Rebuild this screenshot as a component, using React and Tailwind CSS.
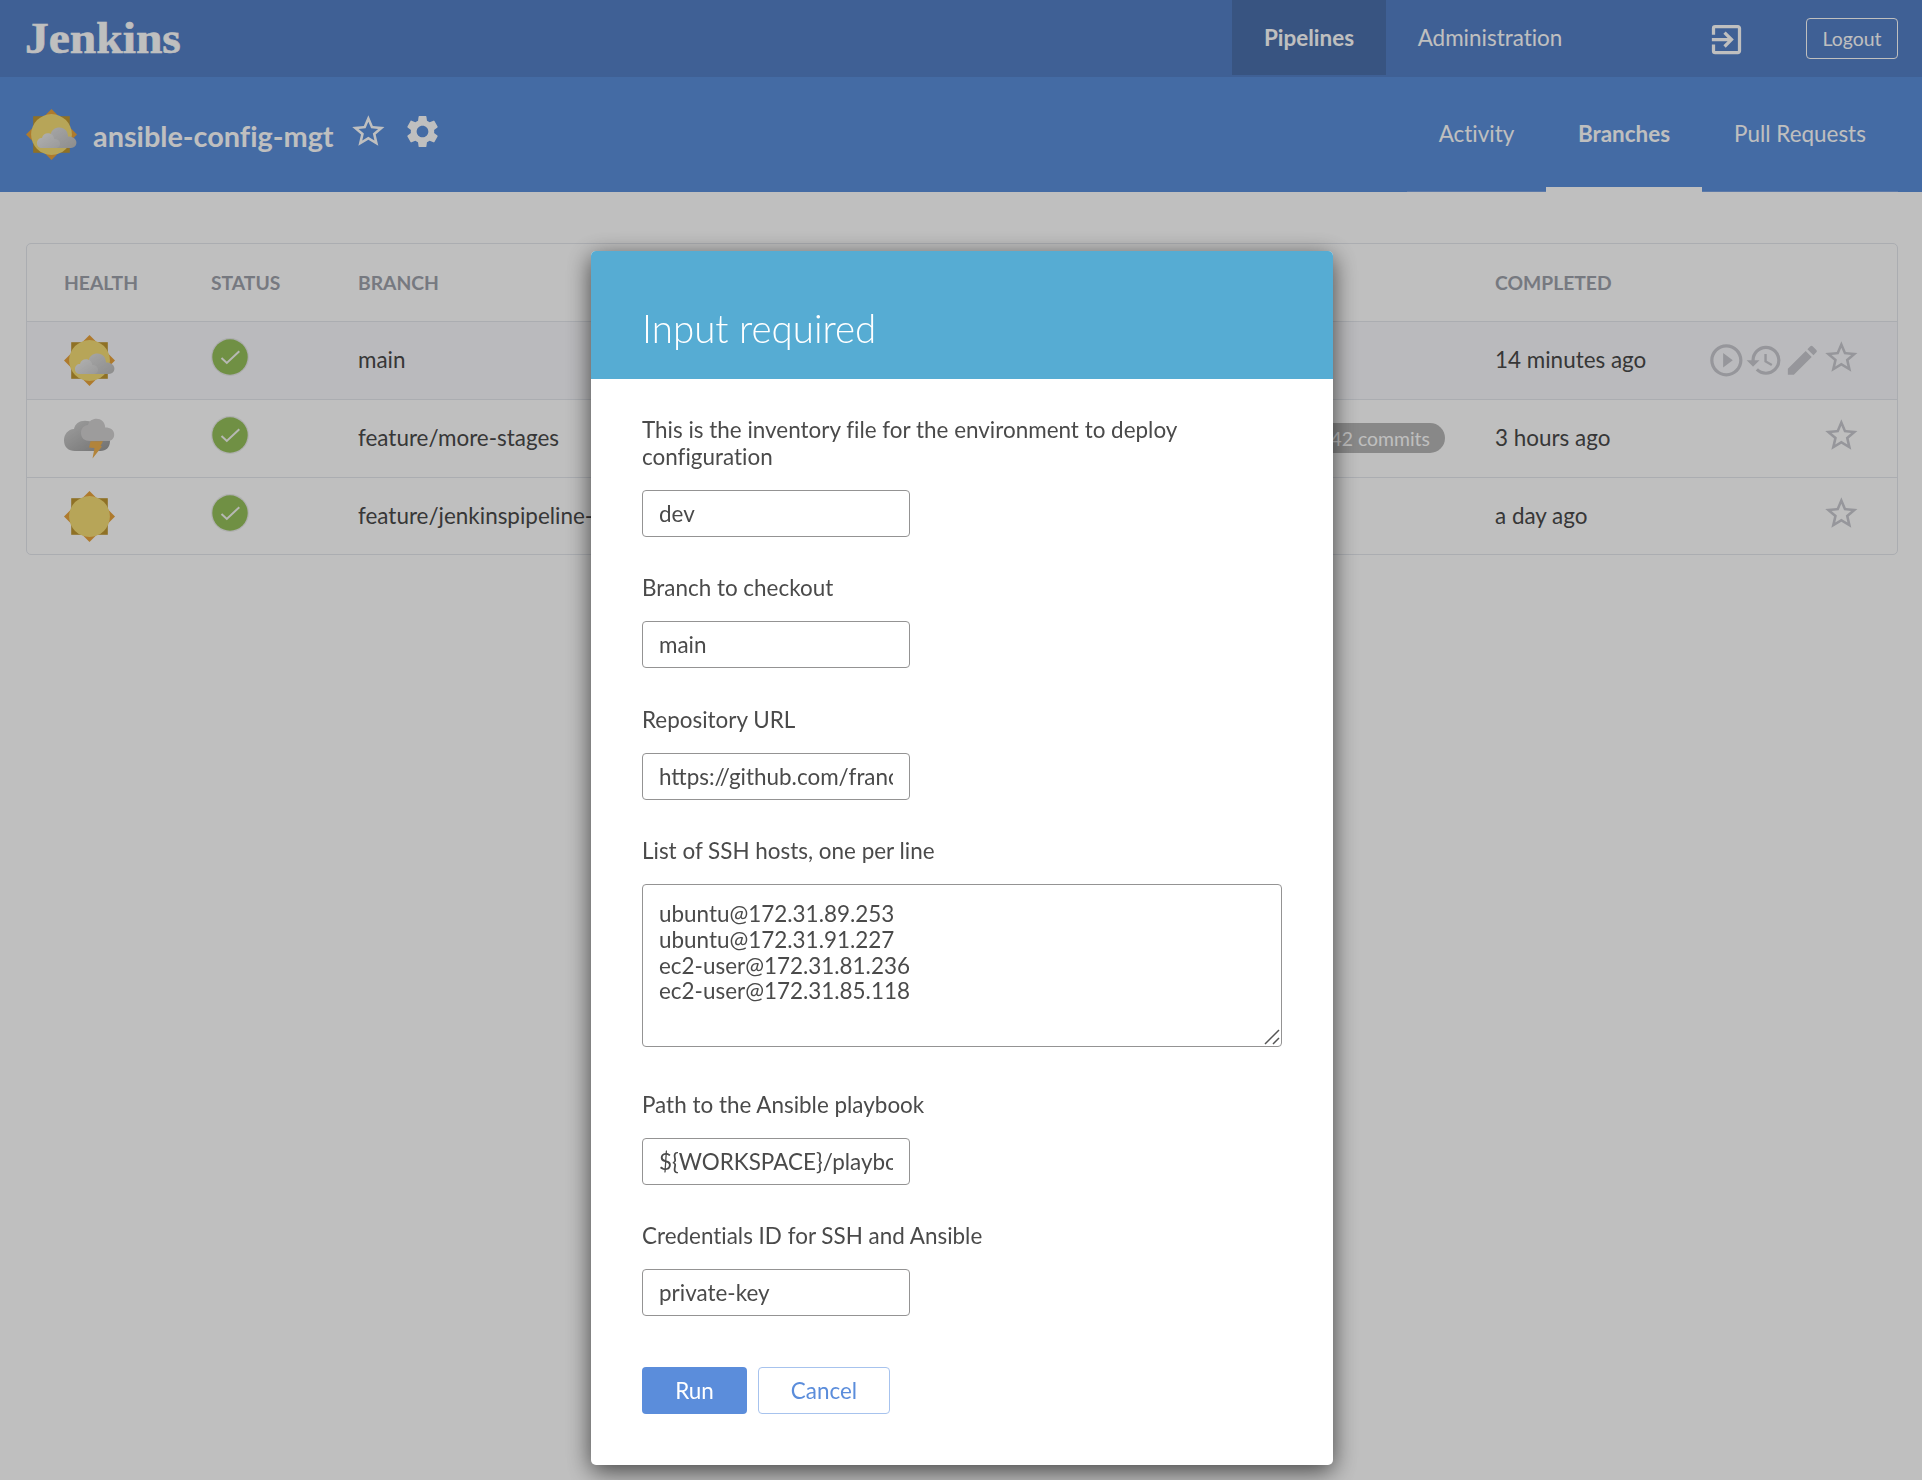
import React from "react";
import {
  MdStarBorder,
  MdSettings,
  MdExitToApp,
  MdPlayCircleOutline,
  MdHistory,
  MdEdit,
} from "react-icons/md";

function SunShape() {
  return (
    <>
      <path d="M25.5 0 L51 25.5 L25.5 51 L0 25.5 Z" fill="#e8a33d" />
      <rect x="7.2" y="7.2" width="36.6" height="36.6" fill="#bf9732" />
      <circle cx="25.5" cy="25.5" r="20.4" fill="#f5dc76" />
    </>
  );
}

function PartlyCloudy() {
  return (
    <svg width="51" height="51" viewBox="0 0 51 51" className="block shrink-0">
      <defs>
        <linearGradient id="cloudBack" x1="0" y1="0" x2="1" y2="1">
          <stop offset="0" stopColor="#e0e0e0" />
          <stop offset="1" stopColor="#bcbcbc" />
        </linearGradient>
        <linearGradient id="cloudFront" x1="0" y1="0" x2="1" y2="1">
          <stop offset="0" stopColor="#ededed" />
          <stop offset="1" stopColor="#cdcdcd" />
        </linearGradient>
      </defs>
      <SunShape />
      <path
        d="M20 39 C19 30 22 27 24.7 26 C25 21 29 18.4 33.5 18.4 C38.5 18.4 42 22 42 27.5 C47 27.5 50.4 30 50.4 33.6 C50.4 37 48 39 45 39 Z"
        fill="url(#cloudBack)"
      />
      <path
        d="M16 39 C13 39 11 37 11 34.2 C11 31 13 29 16 29 C16.5 26 19 24.2 22 24.2 C25.500 24.200 28 26.500 28.200 30 C31.500 30 34 32 34 34.800 C34 37.500 32 39 29.500 39 Z"
        fill="url(#cloudFront)"
      />
    </svg>
  );
}

function Sunny() {
  return (
    <svg width="51" height="51" viewBox="0 0 51 51" className="block shrink-0">
      <SunShape />
    </svg>
  );
}

function Storm() {
  return (
    <svg width="51" height="51" viewBox="0 0 51 51" className="block shrink-0">
      <defs>
        <linearGradient id="stormBack" x1="0" y1="0" x2="1" y2="1">
          <stop offset="0" stopColor="#d6d6d6" />
          <stop offset="1" stopColor="#979797" />
        </linearGradient>
      </defs>
      <path
        d="M11 38 C4.500 38 0 34 0 27.500 C0 21 4 16.500 10 16 C11 11 15 7.800 21 7.800 C27 7.800 31 11 33 16 L46 28 C46 34.500 42 38 36.500 38 Z"
        fill="url(#stormBack)"
      />
      <path
        d="M26 28 C20.500 28 17 25 17 20 C17 15 20 12.500 24 12 C25 8 28.500 5.800 32.500 5.800 C37 5.800 41 9 41.200 14.500 C46.500 14.500 50.200 17 50.200 21.500 C50.200 25.500 47.500 28 44 28 Z"
        fill="#d2d0d1"
      />
      <path d="M26.500 28.200 L39 28.200 L36.500 33 L38 33.500 L28.500 45.500 L30.500 35 L25 34.500 Z" fill="#eeb04f" />
    </svg>
  );
}

function StatusOk() {
  return (
    <svg width="40" height="40" viewBox="0 0 40 40" className="-ml-px block">
      <circle cx="20" cy="20" r="18.900" fill="#c4c6c2" fillOpacity="0.35" />
      <circle cx="20" cy="20" r="17.700" fill="#96c05b" />
      <path d="M11.500 21 L16.800 26 L29.300 14.200" fill="none" stroke="#f4f6f0" strokeWidth="2" />
    </svg>
  );
}

const branches = [
  { Health: PartlyCloudy, name: "main", completed: "14 minutes ago", hovered: true },
  { Health: Storm, name: "feature/more-stages", completed: "3 hours ago", message: "42 commits" },
  { Health: Sunny, name: "feature/jenkinspipeline-", completed: "a day ago" },
];

const GRID = "grid grid-cols-[147px_147px_791.500px_345.500px_1fr] items-center";

function BranchRow({ Health, name, completed, hovered, message }) {
  return (
    <div
      className={
        GRID +
        " h-[78px] border-t border-[#e4e7ed] pr-[36px] pb-px pl-[37px] last:h-[77px] last:pb-0 " +
        (hovered ? "bg-[#f9f9fc]" : "")
      }
    >
      <Health />
      <div className="-mt-[6px]">
        <StatusOk />
      </div>
      <span>{name}</span>
      <div className="flex">
        {message && (
          <span className="ml-[166px] flex h-[30px] items-center rounded-full bg-[#b6b6b6] px-[15px] pt-px text-[19.400px] text-white">
            {message}
          </span>
        )}
      </div>
      <div className="flex items-center justify-between whitespace-nowrap">
        <span>{completed}</span>
        <div className="flex items-center text-[#c8c9cf]">
          {hovered && (
            <>
              <MdPlayCircleOutline size={38.7} />
              <MdHistory size={38.7} className="-ml-[0.500px]" />
              <MdEdit size={38.7} className="-ml-[0.700px] mr-[0.500px]" />
            </>
          )}
          <MdStarBorder size={38.7} className="-mt-[6px]" />
        </div>
      </div>
    </div>
  );
}

function Field({ label, value, gap = "mt-[37px]" }) {
  return (
    <div className={gap}>
      <label className="block leading-[27px] [font-variant-ligatures:none]">{label}</label>
      <input
        className="mt-[20px] block h-[47px] w-[268px] rounded-[4px] border border-[#949393] px-4"
        defaultValue={value}
      />
    </div>
  );
}

const hosts = "ubuntu@172.31.89.253\nubuntu@172.31.91.227\nec2-user@172.31.81.236\nec2-user@172.31.85.118";

function InputDialog() {
  return (
    <div className="fixed inset-0 flex items-start justify-center bg-black/25 pt-[251px] pl-[2px]">
      <div className="h-[1214px] w-[742px] rounded-[5px] bg-white text-[#4a4a4a] shadow-[0_6px_25px_rgba(0,0,0,0.65)]">
        <div className="h-[128px] rounded-t-[5px] bg-[#56acd3] px-[51px] pt-[54px]">
          <h1 className="text-[38.500px] leading-[46px] font-light text-white">Input required</h1>
        </div>
        <div className="px-[51px] pt-[37px]">
          <Field
            gap="mt-0"
            label="This is the inventory file for the environment to deploy configuration"
            value="dev"
          />
          <Field label="Branch to checkout" value="main" />
          <Field gap="mt-[38px]" label="Repository URL" value="https://github.com/francis" />
          <div className="mt-[37px]">
            <label className="block leading-[27px]">List of SSH hosts, one per line</label>
            <div className="relative mt-[20px]">
              <textarea
                className="block h-[163px] w-[640px] resize-none rounded-[4px] border border-[#949393] px-4 pt-[16px] leading-[25.800px]"
                defaultValue={hosts}
              />
              <svg
                width="16"
                height="16"
                viewBox="0 0 16 16"
                className="absolute right-[2px] bottom-[2px]"
                stroke="#555"
                strokeWidth="1.500"
              >
                <path d="M1 15 L15 1 M9 15 L15 9" />
              </svg>
            </div>
          </div>
          <Field gap="mt-[44px]" label="Path to the Ansible playbook" value="${WORKSPACE}/playbook" />
          <Field label="Credentials ID for SSH and Ansible" value="private-key" />
          <div className="mt-[51px] flex gap-[11px]">
            <button className="h-[47px] w-[105px] rounded-[4px] bg-[#5b8ddb] text-white">Run</button>
            <button className="h-[47px] w-[132px] rounded-[4px] border border-[#a7c3ee] text-[#5b8ddb]">Cancel</button>
          </div>
        </div>
      </div>
    </div>
  );
}

export default function App() {
  return (
    <div className="h-[1480px] overflow-hidden bg-white font-['Lato',sans-serif] text-[22.450px] text-[#4a4a4a]">
      <header className="flex h-[77px] items-start justify-between bg-[#5580c7] pr-[24px] pl-[25px] text-white">
        <div className="origin-left scale-x-[1.080] pt-[13px] font-['Liberation_Serif',serif] text-[44px] leading-[52px] font-bold [-webkit-text-stroke:0.600px_white]">
          Jenkins
        </div>
        <nav className="flex items-start">
          <a className="flex h-[75px] w-[154px] items-center justify-center bg-[#4b71ac] font-bold">Pipelines</a>
          <a className="block h-[75px] w-[208px] text-center leading-[75px] [font-variant-ligatures:none]">
            Administration
          </a>
          <MdExitToApp size={39} className="mt-[20px] ml-[113px]" />
          <button className="mt-[18px] ml-[60px] h-[41px] w-[92px] rounded-[4px] border border-white text-[19.400px]">
            Logout
          </button>
        </nav>
      </header>
      <section className="flex h-[115px] justify-between bg-[#5b8fdb] pr-[24px] pl-[26px] text-white">
        <div className="flex items-center pb-[1px]">
          <PartlyCloudy />
          <h1 className="mt-[6px] ml-[16px] w-[241px] text-[28.850px] font-bold whitespace-nowrap [font-variant-ligatures:none]">
            ansible-config-mgt
          </h1>
          <MdStarBorder size={38.7} className="-mt-[5px] ml-[15px]" />
          <MdSettings size={39} className="-mt-[5px] ml-[15.500px]" />
        </div>
        <nav className="flex items-stretch">
          <a className="block w-[139px] border-b border-[#7ba2e0] text-center leading-[114px] [font-variant-ligatures:none]">
            Activity
          </a>
          <a className="block w-[156px] border-b-[5px] border-white text-center leading-[114px] font-bold">Branches</a>
          <a className="block w-[196px] border-b border-[#7ba2e0] text-center leading-[114px]">Pull Requests</a>
        </nav>
      </section>
      <main className="mx-[24px] mt-[51px] ml-[26px] rounded-[5px] border border-[#e4e7ed]">
        <div className={GRID + " h-[77px] pt-px pr-[36px] pl-[37px] text-[19.300px] font-bold text-[#9ea2ab]"}>
          <span>HEALTH</span>
          <span>STATUS</span>
          <span>BRANCH</span>
          <span />
          <span>COMPLETED</span>
        </div>
        <div>
          {branches.map((b) => (
            <BranchRow key={b.name} {...b} />
          ))}
        </div>
      </main>
      <InputDialog />
    </div>
  );
}
